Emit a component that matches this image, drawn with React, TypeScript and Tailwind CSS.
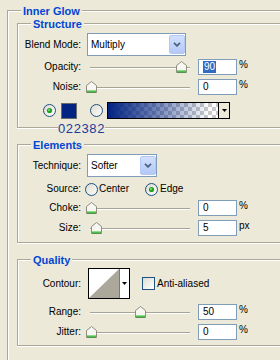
import React from "react";

function Box({ title, className, children }: { title: string; className?: string; children?: React.ReactNode }) {
  return (
    <div
      className={`relative border-t border-l border-b border-[#aca899] shadow-[inset_1px_1px_0_#fff,0_1px_0_#fff] ${className ?? ""}`}
    >
      <span className="absolute left-[13px] -top-[7px] bg-[#ece9d8] px-[2px] text-[11px] font-bold leading-[14px] text-[#0046d5]">
        {title}
      </span>
      {children}
    </div>
  );
}

function Thumb() {
  return (
    <svg width="11" height="12" viewBox="0 0 11 12">
      <path d="M0.5 11.5 V4.5 L5.5 0.5 L10.5 4.5 V11.5 Z" fill="#f7f6f1" stroke="#8e8d80" />
      <path d="M1 10 H10" stroke="#21c121" strokeWidth="1" />
      <path d="M1 11 H10" stroke="#1a9a1a" strokeWidth="1" />
    </svg>
  );
}

function Slider({ pos }: { pos: number }) {
  return (
    <div className="relative w-[111px] h-full">
      <div className="absolute left-[3px] top-[8px] w-[100px] h-[2px] border-t border-[#a6a397] bg-white" />
      <div className="absolute top-[2px] leading-none" style={{ left: pos }}>
        <Thumb />
      </div>
    </div>
  );
}

function Num({ v, sel, unit }: { v: string; sel?: boolean; unit: string }) {
  return (
    <>
      <div className="w-[39px] h-[16px] border border-[#7f9db9] bg-white flex items-center pl-[4px] text-[10px] leading-none">
        {sel ? <span className="bg-[#316ac5] text-white px-[1px] py-[1px]">{v}</span> : v}
      </div>
      <span className="ml-[2px] self-start text-[10px] leading-[12px]">{unit}</span>
    </>
  );
}

function Row({ label, className, children }: { label: string; className?: string; children?: React.ReactNode }) {
  return (
    <div className={`flex items-center ${className ?? ""}`}>
      <div className="w-[63px] shrink-0 text-right text-[10px] leading-[12px]">{label}</div>
      {children}
    </div>
  );
}

function ComboBtn() {
  return (
    <div className="w-[16px] h-[19px] rounded-[2px] border border-[#b4c8f6] bg-[linear-gradient(#d2e0fd,#b3c8f6)] flex items-center justify-center">
      <svg width="8" height="5" viewBox="0 0 8 5">
        <path d="M1 0.8 L4 3.8 L7 0.8" fill="none" stroke="#4d6185" strokeWidth="1.8" />
      </svg>
    </div>
  );
}

function Select({ value, w }: { value: string; w: string }) {
  return (
    <div className={`${w} ml-[6px] h-[23px] border border-[#7f9db9] bg-white flex items-center justify-between pl-[3px] pr-[0px]`}>
      <span className="text-[10px] leading-[12px]">{value}</span>
      <ComboBtn />
    </div>
  );
}

function Radio({ checked }: { checked?: boolean }) {
  return (
    <svg width="13" height="13" viewBox="0 0 13 13" className="shrink-0">
      <defs>
        <linearGradient id="radioGrad" x1="0" y1="0" x2="1" y2="1">
          <stop offset="0" stopColor="#dcd9cd" />
          <stop offset="1" stopColor="#ffffff" />
        </linearGradient>
      </defs>
      <circle cx="6.5" cy="6.5" r="6" fill="url(#radioGrad)" stroke="#1c5180" />
      {checked && (
        <>
          <circle cx="6.5" cy="6.5" r="2.6" fill="#21a121" />
          <circle cx="6" cy="6" r="1" fill="#7fe07f" />
        </>
      )}
    </svg>
  );
}

export default function App() {
  return (
    <div className="w-[280px] h-[360px] overflow-hidden bg-[#ece9d8] pt-[10px] pl-[7px] font-['Liberation_Sans',Arial,sans-serif] text-black">
      <Box title="Inner Glow" className="w-[300px] h-[400px] pt-[12px] pl-[9px]">
        {/* Structure */}
        <Box title="Structure" className="w-[290px] pb-[8px]">
          <Row label="Blend Mode:" className="mt-[9px] h-[23px]">
            <Select value="Multiply" w="w-[99px]" />
          </Row>
          <Row label="Opacity:" className="mt-[3px] h-[16px]">
            <div className="ml-[6px] h-full flex items-center">
              <Slider pos={89} />
              <Num v="90" sel unit="%" />
            </div>
          </Row>
          <Row label="Noise:" className="mt-[4px] h-[16px]">
            <div className="ml-[6px] h-full flex items-center">
              <Slider pos={-1} />
              <Num v="0" unit="%" />
            </div>
          </Row>
          <div className="mt-[7px] h-[17px] flex items-center pl-[25px]">
            <Radio checked />
            <div className="ml-[5px] w-[16px] h-[16px] border border-[#6b6b6b] bg-[#022382]" />
            <div className="ml-[13px]">
              <Radio />
            </div>
            <div className="ml-[4px] w-[123px] h-[17px] border border-black flex">
              <div className="flex-1 bg-[linear-gradient(to_right,#022382,rgba(2,35,130,0.55)_45%,rgba(2,35,130,0)_92%),repeating-conic-gradient(#c9c9c9_0_25%,#ffffff_0_50%)] [background-size:100%_100%,8px_8px]" />
              <div className="w-[11px] border-l border-black bg-[#ece9d8] flex items-center justify-center">
                <svg width="5" height="3" viewBox="0 0 5 3">
                  <path d="M0 0 H5 L2.5 3 Z" fill="#000" />
                </svg>
              </div>
            </div>
          </div>
          <span className="absolute left-[40px] top-[97px] bg-[#ece9d8] text-[13px] leading-[15px] tracking-[0.6px] text-[#1d3a9f]">
            022382
          </span>
        </Box>

        {/* Elements */}
        <Box title="Elements" className="w-[290px] mt-[16px] pb-[6px]">
          <Row label="Technique:" className="mt-[9px] h-[23px]">
            <Select value="Softer" w="w-[70px]" />
          </Row>
          <Row label="Source:" className="mt-[5px] h-[14px]">
            <div className="ml-[4px] w-[60px] flex items-center">
              <Radio />
              <span className="ml-[1px] text-[10px] leading-[12px]">Center</span>
            </div>
            <Radio checked />
            <span className="ml-[2px] text-[10px] leading-[12px]">Edge</span>
          </Row>
          <Row label="Choke:" className="mt-[4px] h-[16px]">
            <div className="ml-[6px] h-full flex items-center">
              <Slider pos={-1} />
              <Num v="0" unit="%" />
            </div>
          </Row>
          <Row label="Size:" className="mt-[4px] h-[16px]">
            <div className="ml-[6px] h-full flex items-center">
              <Slider pos={4} />
              <Num v="5" unit="px" />
            </div>
          </Row>
        </Box>

        {/* Quality */}
        <Box title="Quality" className="w-[290px] mt-[16px] pb-[5px]">
          <Row label="Contour:" className="mt-[8px] h-[31px]">
            <div className="ml-[7px] w-[42px] h-[31px] border border-black bg-white flex">
              <svg width="30" height="29" viewBox="0 0 30 29" className="shrink-0">
                <rect x="0" y="0" width="30" height="29" fill="#ffffff" />
                <path d="M0 29 L30 0 L30 29 Z" fill="#aba89b" />
              </svg>
              <div className="flex-1 border-l border-[#7a7a7a] flex items-center justify-center">
                <svg width="5" height="3" viewBox="0 0 5 3">
                  <path d="M0 0 H5 L2.5 3 Z" fill="#000" />
                </svg>
              </div>
            </div>
            <div className="ml-[12px] w-[13px] h-[13px] border border-[#1c5180] bg-[linear-gradient(135deg,#dcdcd7,#ffffff)]" />
            <span className="ml-[2px] text-[10px] leading-[12px]">Anti-aliased</span>
          </Row>
          <Row label="Range:" className="mt-[5px] h-[16px]">
            <div className="ml-[6px] h-full flex items-center">
              <Slider pos={48} />
              <Num v="50" unit="%" />
            </div>
          </Row>
          <Row label="Jitter:" className="mt-[4px] h-[16px]">
            <div className="ml-[6px] h-full flex items-center">
              <Slider pos={-1} />
              <Num v="0" unit="%" />
            </div>
          </Row>
        </Box>
      </Box>
    </div>
  );
}
